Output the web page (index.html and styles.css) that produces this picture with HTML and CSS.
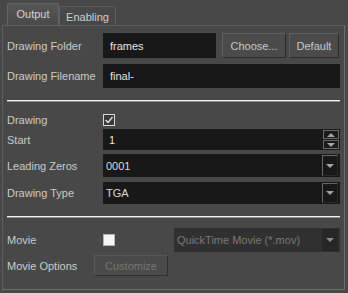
FILE: index.html
```html
<!DOCTYPE html>
<html lang="en">
<head>
    <meta charset="UTF-8">
    <title>Write Node - Output</title>
    <link rel="stylesheet" href="styles.css">
</head>
<body>
    <div class="tabs">
      <div class="tab tab-active">Output</div>
      <div class="tab">Enabling</div>
    </div>

    <div class="panel">
      <div class="row row-folder">
        <span class="label">Drawing Folder</span>
        <div class="field field-folder">frames</div>
        <button class="btn btn-choose">Choose...</button>
        <button class="btn btn-default">Default</button>
      </div>
      <div class="row row-filename">
        <span class="label">Drawing Filename</span>
        <div class="field field-grow">final-</div>
      </div>

      <div class="separator"></div>

      <div class="row row-drawing">
        <span class="label">Drawing</span>
        <span class="checkbox checkbox-checked">
          <svg width="10" height="10" viewBox="0 0 10 10"><polyline points="1.5,5 4,7.5 8.5,2" fill="none" stroke="#e8e8e8" stroke-width="1.3"/></svg>
        </span>
      </div>
      <div class="row row-start">
        <span class="label">Start</span>
        <div class="field field-grow spin">
          <span class="spin-value">1</span>
          <div class="spin-buttons">
            <span class="spin-btn"><span class="arrow arrow-up"></span></span>
            <span class="spin-btn"><span class="arrow arrow-down"></span></span>
          </div>
        </div>
      </div>
      <div class="row row-zeros">
        <span class="label">Leading Zeros</span>
        <div class="combo">
          <span class="combo-value">0001</span>
          <span class="combo-btn"><span class="arrow arrow-down"></span></span>
        </div>
      </div>
      <div class="row row-type">
        <span class="label">Drawing Type</span>
        <div class="combo">
          <span class="combo-value">TGA</span>
          <span class="combo-btn"><span class="arrow arrow-down"></span></span>
        </div>
      </div>

      <div class="separator separator-movie"></div>

      <div class="row row-movie">
        <span class="label">Movie</span>
        <span class="checkbox checkbox-empty"></span>
        <div class="combo combo-disabled">
          <span class="combo-value">QuickTime Movie (*.mov)</span>
          <span class="combo-btn"><span class="arrow arrow-down"></span></span>
        </div>
      </div>
      <div class="row row-options">
        <span class="label label-options">Movie Options</span>
        <button class="btn btn-customize" disabled>Customize</button>
      </div>
    </div>
</body>
</html>
```

FILE: styles.css
```css
body {
  margin: 0;
  background: #484848;
  font-family: "Liberation Sans", Arial, sans-serif;
  font-size: 11px;
  color: #cdcbc6;
}

/* tabs */
.tabs {
  display: flex;
  align-items: flex-end;
  padding: 3px 0 0 7px;
  height: 22px;
}
.tab {
  box-sizing: border-box;
  height: 19px;
  width: 57px;
  padding-top: 4px;
  text-align: center;
  border: 1px solid #5c5c5c;
  border-bottom: none;
  border-radius: 2px 2px 0 0;
  background: #484848;
  color: #cfcfcf;
}
.tab-active {
  height: 22px;
  width: 52px;
  padding-top: 4px;
  background: linear-gradient(#565656, #4a4a4a);
  border-color: #646464;
  color: #d6d6d6;
}

/* panel */
.panel {
  box-sizing: border-box;
  height: 265px;
  margin: 0 3px 0 2px;
  padding: 7px 4px 12px 4px;
  border: 1px solid #5e5e5e;
  border-right-color: #6c6c6c;
  border-bottom-color: #6c6c6c;
  display: flex;
  flex-direction: column;
}

.row {
  display: flex;
  align-items: center;
}
.label {
  width: 96px;
  flex: none;
}
.label-options {
  width: 87px;
}

.row-folder { height: 25px; }
.row-filename { height: 24px; margin-top: 6px; }
.row-drawing { height: 12px; margin-top: 12px; }
.row-start { height: 21px; margin-top: 3px; }
.row-zeros { height: 23px; margin-top: 4px; }
.row-type { height: 22px; margin-top: 5px; }
.row-movie { height: 24px; margin-top: 10px; }
.row-options { height: 21px; margin-top: 3px; }

.separator {
  margin-top: 12px;
  height: 1px;
  background: #f4f4f4;
  border-bottom: 1px solid #8c8c8c;
}

/* text fields */
.field {
  box-sizing: border-box;
  height: 100%;
  background: #181818;
  color: #e4e4e4;
  padding-left: 7px;
  display: flex;
  align-items: center;
}
.field-folder {
  width: 113px;
}
.field-grow {
  flex: 1;
}

/* buttons */
.btn {
  box-sizing: border-box;
  height: 100%;
  font: inherit;
  color: #c9c9c9;
  background: #4b4b4b;
  border: 1px solid #5f5f5f;
  border-right-color: #2a2a2a;
  border-bottom-color: #2a2a2a;
  padding: 0;
}
.btn-choose {
  width: 64px;
  margin-left: 6px;
}
.btn-default {
  width: 50px;
  margin-left: 3px;
}
.btn-customize {
  width: 74px;
  color: #767676;
  background: #4a4a4a;
  border-color: #575757 #303030 #303030 #575757;
}

/* check boxes */
.checkbox {
  box-sizing: border-box;
  width: 12px;
  height: 12px;
  flex: none;
  display: flex;
  align-items: center;
  justify-content: center;
}
.checkbox-checked {
  background: #3a3a3a;
  border: 1px solid #d8d8d8;
}
.checkbox-empty {
  background: #f6f6f6;
  border: 1px solid #b4b4b4;
}

/* spin box */
.spin {
  padding-left: 6px;
  padding-right: 1px;
}
.spin-value {
  flex: 1;
}
.spin-buttons {
  display: flex;
  flex-direction: column;
  gap: 1px;
}
.spin-btn {
  box-sizing: border-box;
  width: 16px;
  height: 9px;
  border: 1px solid #6a6a6a;
  background: #1a1a1a;
  display: flex;
  align-items: center;
  justify-content: center;
}

/* combo boxes */
.combo {
  box-sizing: border-box;
  flex: 1;
  height: 100%;
  background: #181818;
  color: #d8d8dc;
  padding: 1px 2px 1px 3px;
  display: flex;
  align-items: center;
}
.combo-value {
  flex: 1;
}
.combo-btn {
  box-sizing: border-box;
  width: 16px;
  height: 100%;
  border: 1px solid #676767;
  border-right-color: #2a2a2a;
  border-bottom-color: #2a2a2a;
  display: flex;
  align-items: center;
  justify-content: center;
}
.combo-disabled {
  flex: none;
  width: 166px;
  margin-left: auto;
  background: #303030;
  color: #7a7a7a;
}
.combo-disabled .combo-btn {
  background: #262626;
  border-color: #262626;
}

/* arrows */
.arrow {
  width: 0;
  height: 0;
  border-left: 4px solid transparent;
  border-right: 4px solid transparent;
}
.arrow-up {
  border-bottom: 4px solid #a4a4a4;
}
.arrow-down {
  border-top: 4px solid #a4a4a4;
}
.combo-disabled .arrow-down {
  border-top-color: #8a8a8a;
}
```
